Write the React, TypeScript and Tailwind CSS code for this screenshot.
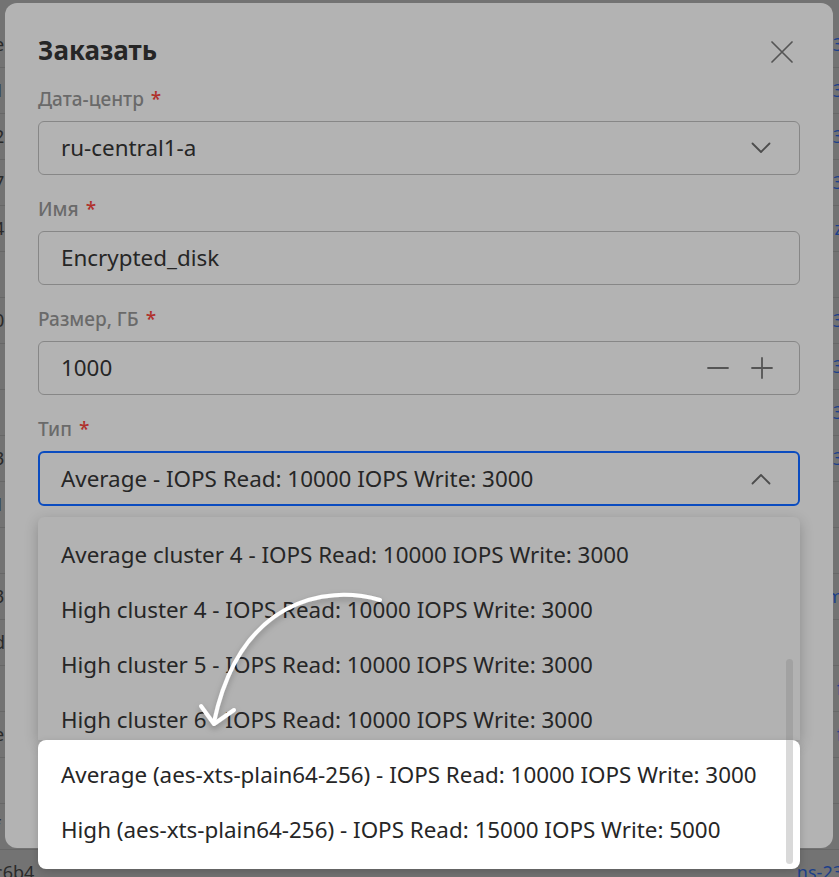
import { ReactNode } from "react";

const rows = [
  { l: "e", r: "3" },
  { l: "1", r: "3" },
  { l: "2", r: "3" },
  { l: "7", r: "3" },
  { l: "4", r: "z" },
  { l: "", r: "" },
  { l: "0", r: "3" },
  { l: "", r: "3" },
  { l: "", r: "3" },
  { l: "3", r: "3" },
  { l: "1", r: "" },
  { l: "", r: "" },
  { l: "3", r: "m" },
  { l: "d", r: "" },
  { l: "", r: "f" },
  { l: "e", r: "f" },
  { l: "", r: "" },
  { l: "f", r: "" },
  { l: "c6b4", r: "ns-23" },
];

const greyItems = [
  "Average cluster 4 - IOPS Read: 10000 IOPS Write: 3000",
  "High cluster 4 - IOPS Read: 10000 IOPS Write: 3000",
  "High cluster 5 - IOPS Read: 10000 IOPS Write: 3000",
  "High cluster 6 - IOPS Read: 10000 IOPS Write: 3000",
];

const whiteItems = [
  "Average (aes-xts-plain64-256) - IOPS Read: 10000 IOPS Write: 3000",
  "High (aes-xts-plain64-256) - IOPS Read: 15000 IOPS Write: 5000",
];

function Label({ children }: { children: ReactNode }) {
  return (
    <div className="flex h-[24px] items-center text-[19px] font-medium text-[#6a6a6a]">
      {children}
      <span className="ml-[7px] text-[#b0302c]">*</span>
    </div>
  );
}

function Chevron({ up }: { up?: boolean }) {
  return (
    <svg width="20" height="14" viewBox="0 0 20 14" fill="none" className="text-[#4d4d4d]">
      <path
        d={up ? "M1.5 11.5 L10 3 L18.5 11.5" : "M1.5 2.5 L10 11 L18.5 2.5"}
        stroke="currentColor"
        strokeWidth="1.8"
        strokeLinecap="round"
        strokeLinejoin="round"
      />
    </svg>
  );
}

export default function App() {
  return (
    <div
      className="relative h-[877px] w-[839px] overflow-hidden bg-[#737373]"
      style={{ fontFamily: '"Noto Sans", "Open Sans", sans-serif' }}
    >
      {/* page behind the dialog */}
      <div className="flex flex-col pt-[22px]">
        {rows.map((row, i) => (
          <div
            key={i}
            className="flex h-[46px] items-center justify-between border-b border-[#676767] text-[18px]"
          >
            <span className="-ml-[6px] text-[#2a2a2a]">{row.l}</span>
            <span className="-mr-[4px] text-[#1c3f8a]">{row.r}</span>
          </div>
        ))}
      </div>

      {/* dialog */}
      <div className="absolute left-[5px] top-[3px] h-[845px] w-[828px] rounded-[12px] bg-[#b3b3b3] px-[33px] pt-[33px]">
        <div className="flex h-[28px] items-center justify-between">
          <h2 className="text-[26px] font-bold text-[#262626]">Заказать</h2>
          <svg width="22" height="22" viewBox="0 0 22 22" className="mr-[7px] mt-[4px] text-[#555]">
            <path d="M1 1 L21 21 M21 1 L1 21" stroke="currentColor" strokeWidth="1.7" strokeLinecap="round" />
          </svg>
        </div>

        <div className="mt-[23px]">
          <Label>Дата-центр</Label>
          <div className="mt-[10px] flex h-[54px] items-center justify-between rounded-[6px] border border-[#878787] pl-[22px] pr-[28px] text-[22.4px] text-[#262626]">
            <span>ru-central1-a</span>
            <Chevron />
          </div>
        </div>

        <div className="mt-[22px]">
          <Label>Имя</Label>
          <div className="mt-[10px] flex h-[54px] items-center rounded-[6px] border border-[#878787] pl-[22px] text-[22.4px] text-[#262626]">
            Encrypted_disk
          </div>
        </div>

        <div className="mt-[22px]">
          <Label>Размер, ГБ</Label>
          <div className="mt-[10px] flex h-[54px] items-center justify-between rounded-[6px] border border-[#878787] pl-[22px] pr-[26px] text-[22.4px] text-[#262626]">
            <span>1000</span>
            <div className="flex items-center gap-[22px] text-[#555]">
              <svg width="22" height="22" viewBox="0 0 22 22">
                <path d="M1 11 H21" stroke="currentColor" strokeWidth="1.8" strokeLinecap="round" />
              </svg>
              <svg width="22" height="22" viewBox="0 0 22 22">
                <path d="M1 11 H21 M11 1 V21" stroke="currentColor" strokeWidth="1.8" strokeLinecap="round" />
              </svg>
            </div>
          </div>
        </div>

        <div className="mt-[22px]">
          <Label>Тип</Label>
          <div className="relative mt-[10px]">
            <div className="flex h-[55px] items-center justify-between rounded-[6px] border-2 border-[#0b4cc0] pl-[21px] pr-[27px] text-[22.4px] text-[#262626]">
              <span>Average - IOPS Read: 10000 IOPS Write: 3000</span>
              <Chevron up />
            </div>

            {/* open list */}
            <div className="absolute left-0 right-0 top-[66px] text-[22.4px] text-[#262626]">
              <div className="relative h-[223px] overflow-hidden rounded-t-[6px] bg-[#b2b2b2] pt-[10px] shadow-[0_4px_14px_rgba(0,0,0,0.22)]">
                {greyItems.map((t) => (
                  <div key={t} className="flex h-[55px] items-center pl-[23px]">
                    {t}
                  </div>
                ))}
                <div className="absolute right-[7px] top-[142px] h-[90px] w-[7px] rounded-full bg-[#a2a2a2]" />
              </div>
              <div className="relative h-[129px] rounded-[8px] bg-white pt-[7px] shadow-[0_3px_8px_rgba(0,0,0,0.18)]">
                {whiteItems.map((t) => (
                  <div key={t} className="flex h-[55px] items-center pl-[23px]">
                    {t}
                  </div>
                ))}
                <div className="absolute right-[7px] top-0 h-[124px] w-[7px] rounded-b-full bg-[#d9d9d9]" />
              </div>
            </div>
          </div>
        </div>
      </div>

      {/* annotation arrow */}
      <svg className="pointer-events-none absolute left-0 top-0" width="839" height="877" viewBox="0 0 839 877">
        <defs>
          <filter id="sh" x="-20%" y="-20%" width="140%" height="140%">
            <feDropShadow dx="0" dy="3" stdDeviation="3" floodColor="#000" floodOpacity="0.25" />
          </filter>
        </defs>
        <g filter="url(#sh)" stroke="#fff" strokeWidth="4" fill="none" strokeLinecap="round" strokeLinejoin="round">
          <path d="M380 600 C 325 584, 240 600, 214 722" />
          <path d="M201 706 L214 724 L234 710" />
        </g>
      </svg>
    </div>
  );
}
